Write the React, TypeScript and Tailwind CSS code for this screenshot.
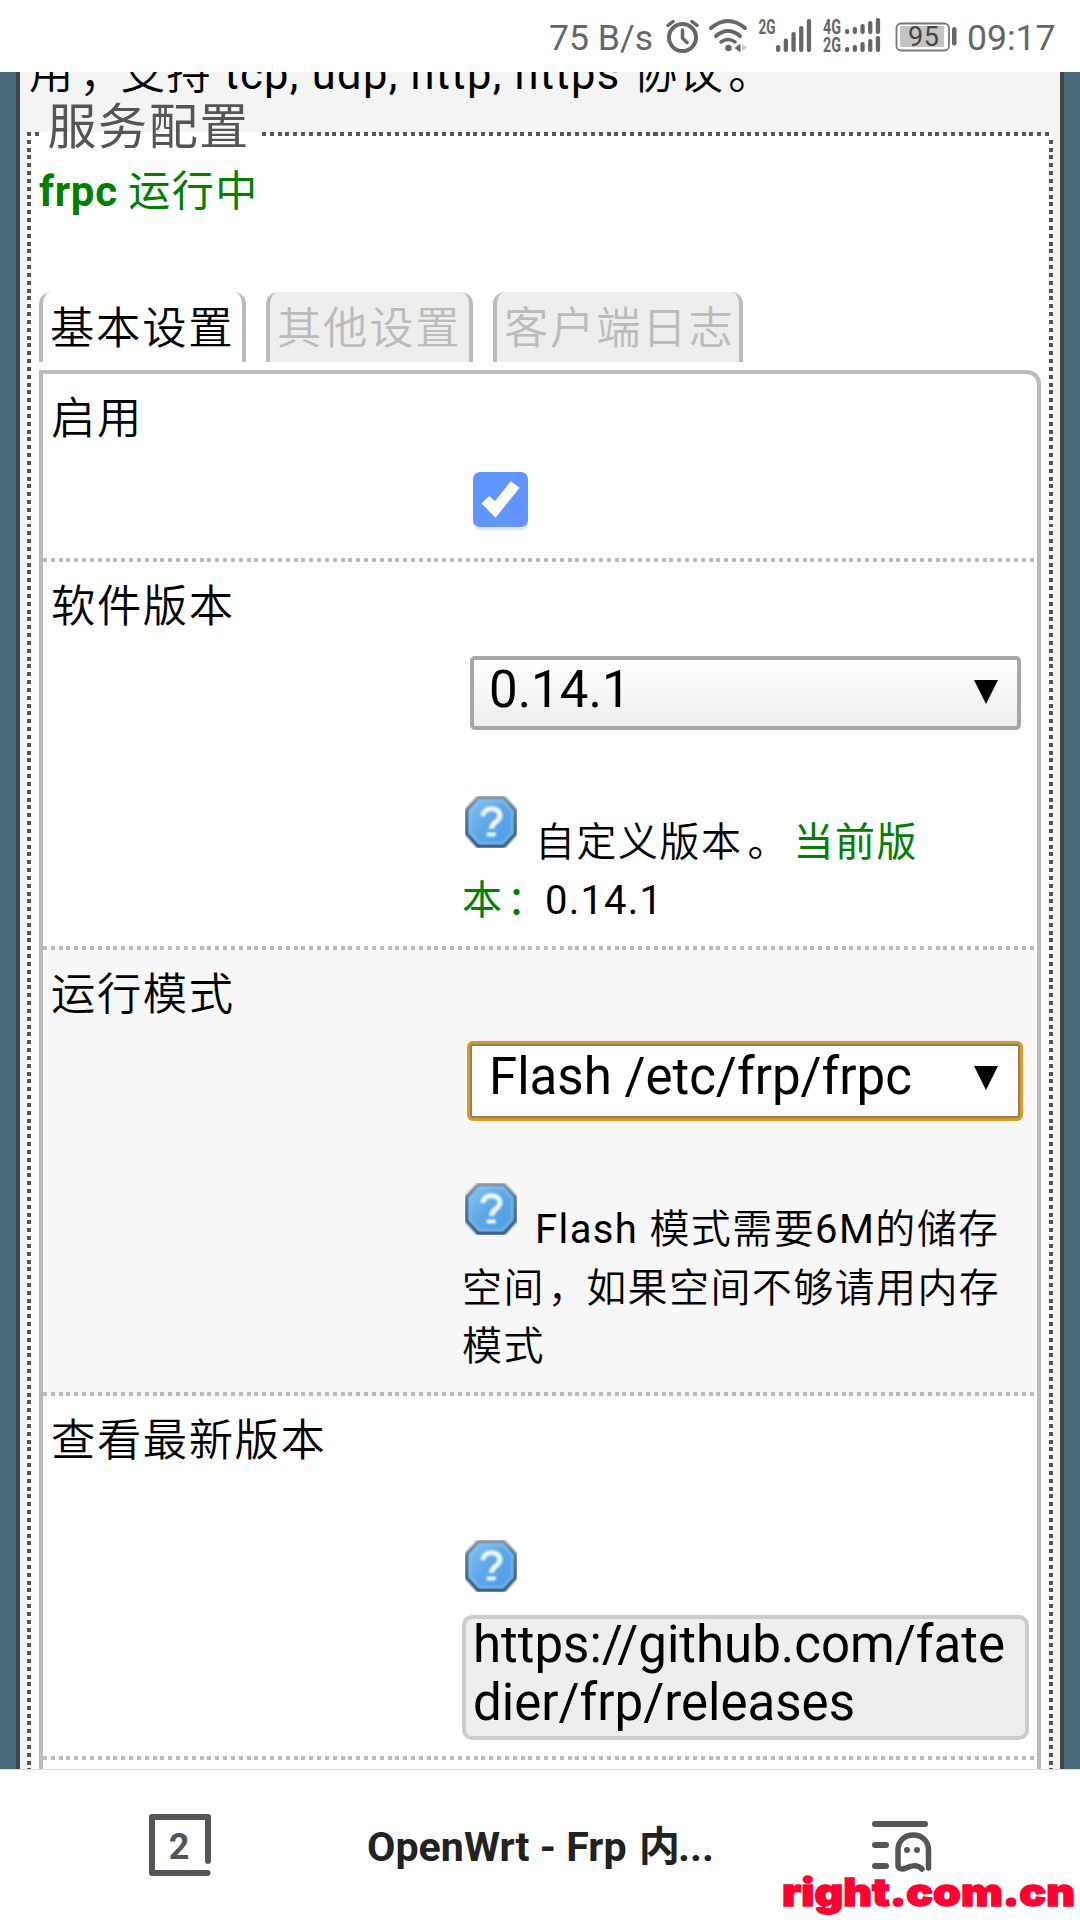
import React from 'react';

const CJK = "font-[Roboto,'Noto_Sans_CJK_SC',sans-serif]";

function DotsX({ className = '' }: { className?: string }) {
  return (
    <div
      className={
        'h-[4px] bg-[repeating-linear-gradient(90deg,#bbbbbb_0px,#bbbbbb_4px,transparent_4px,transparent_7.83px)] ' + className
      }
    />
  );
}

function DotsDark({ className = '' }: { className?: string }) {
  return (
    <div
      className={
        'h-[4px] bg-[repeating-linear-gradient(90deg,#555555_0px,#555555_4px,transparent_4px,transparent_7.83px)] ' + className
      }
    />
  );
}

function DotsY() {
  return (
    <div className="w-[4px] shrink-0 self-stretch bg-[repeating-linear-gradient(180deg,transparent_0px,transparent_3.83px,#555555_3.83px,#555555_7.83px)]" />
  );
}

function HelpIcon({ className = '' }: { className?: string }) {
  return (
    <svg viewBox="0 0 52 52" className={'h-[52px] w-[52px] ' + className}>
      <defs>
        <linearGradient id="helpFill" x1="0" y1="0" x2="1" y2="1">
          <stop offset="0" stopColor="#8cc4f2" />
          <stop offset="0.5" stopColor="#5ba6e6" />
          <stop offset="1" stopColor="#4a9be6" />
        </linearGradient>
        <linearGradient id="helpEdge" x1="0" y1="0" x2="0" y2="1">
          <stop offset="0" stopColor="#7f8a94" />
          <stop offset="0.35" stopColor="#3f5f7e" />
          <stop offset="1" stopColor="#1f4468" />
        </linearGradient>
      </defs>
      <g className="blur-[0.9px]">
        <path d="M13 1.5H39L50.5 14V38L39 50.5H13L1.5 38V14Z" fill="url(#helpFill)" stroke="url(#helpEdge)" strokeWidth="3" />
        <path d="M14.5 4.5H37.5L47.5 15.5V36.5L37.5 47.5H14.5L4.5 36.5V15.5Z" fill="none" stroke="#8fc5f2" strokeWidth="2.4" opacity="0.7" />
        <path d="M18 20C18 10.5 35 10.5 35 19.5C35 26 26.5 25.5 26.5 33" fill="none" stroke="#f0f8ff" strokeWidth="5" />
        <rect x="21.5" y="36.5" width="9.5" height="4" rx="1.5" fill="#f0f8ff" />
      </g>
    </svg>
  );
}

function Bars({ x, y, hs, w }: { x: number; y: number; hs: number[]; w: number }) {
  return (
    <>
      {hs.map((h, i) => (
        <rect key={i} x={x + i * 7.7} y={y - h} width={w} height={h} rx={2} />
      ))}
    </>
  );
}

function StatusBar() {
  return (
    <div className="flex h-[72px] shrink-0 items-center bg-white pl-[549px] text-[35.600px] leading-[74px] text-[#666666]">
      <span className="w-[117px] pt-[3px] whitespace-nowrap">75 B/s</span>
      <svg className="h-[72px] w-[34px] shrink-0" viewBox="666 0 34 72" fill="none" stroke="#666666" strokeLinecap="round">
        <circle cx="682.5" cy="37.5" r="13.5" strokeWidth="4" />
        <path d="M682.5 30V38L687 42.5" strokeWidth="3.5" />
        <path d="M668 25.5L673 21.5M697 25.5L692 21.5" strokeWidth="3.5" />
      </svg>
      <svg className="ml-[8px] h-[72px] w-[41px] shrink-0" viewBox="708 0 41 72" fill="none" stroke="#666666" strokeLinecap="round">
        <path d="M711 28Q728 14 745 28" strokeWidth="4" />
        <path d="M716 36Q728 26 740 36" strokeWidth="4" />
        <path d="M721 42Q728 37 735 42" strokeWidth="3.5" />
        <circle cx="728.5" cy="48" r="3.3" fill="#666666" stroke="none" />
        <path d="M734.5 48L740.5 43.5V52.5Z" fill="#666666" stroke="none" />
        <path d="M742 44L747.5 47.5L742 51Z" fill="#cccccc" stroke="none" />
      </svg>
      <svg className="ml-[9px] h-[72px] w-[54px] shrink-0" viewBox="758 0 54 72" fill="#666666">
        <text x="758.5" y="34" textLength="17" lengthAdjust="spacingAndGlyphs" className="font-[Roboto] text-[20px] font-bold">2G</text>
        <Bars x={776} y={52} w={4.3} hs={[7, 13.5, 20, 26, 33]} />
      </svg>
      <svg className="ml-[10px] h-[72px] w-[60px] shrink-0" viewBox="822 0 60 72" fill="#666666">
        <text x="823" y="34" textLength="18" lengthAdjust="spacingAndGlyphs" className="font-[Roboto] text-[20px] font-bold">4G</text>
        <text x="823" y="52" textLength="18" lengthAdjust="spacingAndGlyphs" className="font-[Roboto] text-[20px] font-bold">2G</text>
        <Bars x={845} y={34} w={4.3} hs={[5, 7, 10, 13, 16]} />
        <Bars x={845} y={52} w={4.3} hs={[5, 7, 10, 13, 16]} />
      </svg>
      <svg className="ml-[13px] h-[72px] w-[63px] shrink-0" viewBox="895 0 63 72">
        <rect x="896.5" y="23.5" width="52.5" height="27" rx="4.5" fill="white" stroke="#777777" strokeWidth="1.8" />
        <rect x="900" y="26" width="44" height="21" fill="#c4c4c4" />
        <rect x="952" y="27" width="4.5" height="18.5" rx="2.2" fill="#666666" />
        <text x="908" y="46" textLength="31" className="font-[Roboto] text-[27px]" fill="#444444">95</text>
      </svg>
      <span className="ml-[9px] pt-[3px] whitespace-nowrap">09:17</span>
    </div>
  );
}

function Row({ label, className, children }: { label: string; className: string; children: React.ReactNode }) {
  return (
    <div className={'flex shrink-0 flex-col ' + className}>
      <div className="flex-1 pt-[15px]">
        <div className="h-[59px] pl-[8px] text-[44.300px] leading-[60px] font-[350] tracking-[1.600px] text-black">{label}</div>
        <div className="ml-[419px]">{children}</div>
      </div>
      <DotsX />
    </div>
  );
}

function Arrow() {
  return (
    <svg viewBox="0 0 24 24" className="mt-[20px] h-[24px] w-[24px]">
      <path d="M0 0H24L12 24Z" />
    </svg>
  );
}

function Tab({ text, active, className }: { text: string; active?: boolean; className: string }) {
  return (
    <div
      className={
        'h-[70px] rounded-t-[12px] border-x-4 border-[#bbbbbb] pl-[7px] text-[44.300px] leading-[74px] font-[350] tracking-[1.800px] whitespace-nowrap ' +
        (active ? 'bg-white text-black ' : 'bg-[#eeeeee] text-[#bbbbbb] ') +
        className
      }
    >
      {text}
    </div>
  );
}

export default function App() {
  return (
    <div className={'flex h-[1920px] w-[1080px] flex-col overflow-hidden bg-white text-black ' + CJK}>
      <StatusBar />
      <main className="flex h-[1697px] shrink-0 overflow-hidden border-x-[16px] border-[#4a6b7c] bg-[#f4f4f4]">
        <div className="w-[4px] shrink-0 bg-[#444444]" />
        <div className="flex w-[1040px] shrink-0 flex-col">
          <div className="h-[60px] shrink-0 overflow-hidden pl-[9px]">
            <div className="mt-[-28px] text-[44.300px] leading-[60px] font-[350] tracking-[1.500px] whitespace-nowrap">
              用<span className="relative left-[4px]">；</span>支持 <span className="text-[43.500px] font-normal tracking-[1.300px]">tcp, udp, http, https</span> 协议<span className="relative left-[4px]">。</span>
            </div>
          </div>
          <div className="mx-[7px] flex flex-1 flex-col bg-white">
            <div className="flex h-[4px] shrink-0">
              <DotsDark className="w-[12px]" />
              <div className="flex w-[223px] items-center pl-[8.500px]">
                <span className="mt-[-12px] text-[49px] leading-[60px] tracking-[1.600px] whitespace-nowrap text-[#555555]">服务配置</span>
              </div>
              <DotsDark className="flex-1" />
            </div>
            <div className="flex flex-1">
              <DotsY />
              <div className="flex-1 pl-[8px]">
                <div className="h-[156px] pt-[26px] text-[42px] leading-[60px] text-[#008000]">
                  <b className="tracking-[0.700px]">frpc</b> <span className="tracking-[1.600px]">运行中</span>
                </div>
                <div className="flex">
                  <Tab text="基本设置" active className="w-[207px]" />
                  <Tab text="其他设置" className="ml-[20px] w-[207px]" />
                  <Tab text="客户端日志" className="ml-[20px] w-[250px]" />
                </div>
                <div className="mt-[8px] flex h-[1500px] w-[1002px] flex-col rounded-tr-[14px] border-4 border-[#bbbbbb]">
                  <Row label="启用" className="h-[188px]">
                    <div className="mt-[24px] ml-[11px] h-[55px] w-[55px] rounded-[7px] bg-[#6095ff] shadow-[0_3px_1px_#dfe5f0]">
                      <svg viewBox="0 0 56 55" className="h-[55px] w-[55px]">
                        <path d="M8.5 31.5L16.5 24L22.5 29L38.5 9L47.5 15.5L23 46Z" fill="white" />
                      </svg>
                    </div>
                  </Row>
                  <Row label="软件版本" className="h-[388px]">
                    <div className="mt-[20px] ml-[8px] flex h-[74px] w-[551px] justify-between rounded-[5px] border-[4px] border-[#a6a6a6] bg-linear-to-b from-white to-[#ededed] pr-[19px] pl-[15px]">
                      <span className="text-[51px] leading-[59px]">0.14.1</span>
                      <Arrow />
                    </div>
                    <div className="mt-[84px] text-[40px] leading-[58px] font-[350] tracking-[1.500px] whitespace-nowrap">
                      <HelpIcon className="mt-[-20px] mr-[12px] ml-[3px] inline-block align-[8px]" />
                      <span className="pl-[6px]">自定义版本<span className="relative left-[5px]">。</span></span>
                      <span className="ml-[-2px] font-normal text-[#008000]"> 当前版<br />本<span className="relative left-[3px]">：</span></span>
                      <span className="font-normal tracking-[1.200px]">0.14.1</span>
                    </div>
                  </Row>
                  <Row label="运行模式" className="h-[446px] bg-[#f7f7f7]">
                    <div className="mt-[20px] ml-[8px] flex h-[74px] w-[550px] justify-between rounded-[3px] border-2 border-[#8d7f62] bg-white pr-[20px] pl-[17px] shadow-[0_0_0_3px_#dc9a20]">
                      <span className="mt-[2px] text-[51px] leading-[58px] whitespace-nowrap">Flash /etc/frp/frpc</span>
                      <Arrow />
                    </div>
                    <div className="mt-[83px] text-[40px] leading-[58.500px] font-[350] tracking-[1.400px] whitespace-nowrap">
                      <HelpIcon className="mt-[-20px] mr-[13px] ml-[3px] inline-block align-[8px]" />
                      <span className="pl-[5px] font-normal">Flash</span> 模式需要<span className="font-normal">6M</span>的储存<br />
                      空间<span className="relative left-[3px]">，</span>如果空间不够请用内存<br />
                      模式
                    </div>
                  </Row>
                  <Row label="查看最新版本" className="h-[364px]">
                    <HelpIcon className="mt-[70px] ml-[3px] block" />
                    <div className="mt-[23px] h-[125px] w-[567px] rounded-[10px] border-4 border-[#cccccc] bg-[#eeeeee] pl-[7px] text-[51px] leading-[58px] whitespace-nowrap">
                      <div className="mt-[-3px]">https://github.com/fate<br />dier/frp/releases</div>
                    </div>
                  </Row>
                </div>
              </div>
              <DotsY />
            </div>
          </div>
        </div>
        <div className="w-[4px] shrink-0 bg-[#444444]" />
      </main>
      <footer className="relative flex h-[151px] shrink-0 items-start border-t border-[#dddddd] bg-white">
        <div className="mt-[44px] ml-[149px] grid h-[62px] w-[62px] shrink-0 place-items-center">
          <svg viewBox="0 0 62 62" className="col-start-1 row-start-1 h-[62px] w-[62px]" fill="none" stroke="#555555" strokeWidth="6" strokeLinecap="round" strokeLinejoin="round">
            <path d="M59 47V3H3V59H58.5" />
          </svg>
          <span className="col-start-1 row-start-1 pt-[3px] pr-[2px] text-[36px] leading-[40px] font-bold text-[#555555]">2</span>
        </div>
        <div className="mt-[47px] ml-[156px] w-[360px] text-[41.200px] leading-[60px] font-bold whitespace-nowrap text-[#222222]">
          OpenWrt - Frp <span className="relative left-[2px]">内</span>...
        </div>
        <svg viewBox="0 0 60 54" className="mt-[50px] ml-[145px] h-[54px] w-[60px] shrink-0" fill="none" stroke="#555555" strokeWidth="6" strokeLinecap="round">
          <path d="M3 4H53M3 25H14M3 46H14" />
          <path d="M56.5 48V30C56.5 10 26 10 26 30V45C26 49 30 50 34 48C40 45 46 45 50 49" strokeWidth="5.5" />
          <circle cx="35" cy="30" r="3" fill="#555555" stroke="none" />
          <circle cx="45" cy="30" r="3" fill="#555555" stroke="none" />
        </svg>
        <svg viewBox="0 0 298 50" className="absolute right-0 bottom-0 h-[50px] w-[298px]">
          <text x="0" y="36" textLength="293" lengthAdjust="spacingAndGlyphs" className="font-[Inter] text-[39px] font-black" fill="#ff0033" stroke="#ff0033" strokeWidth="1.5">right.com.cn</text>
        </svg>
      </footer>
    </div>
  );
}
